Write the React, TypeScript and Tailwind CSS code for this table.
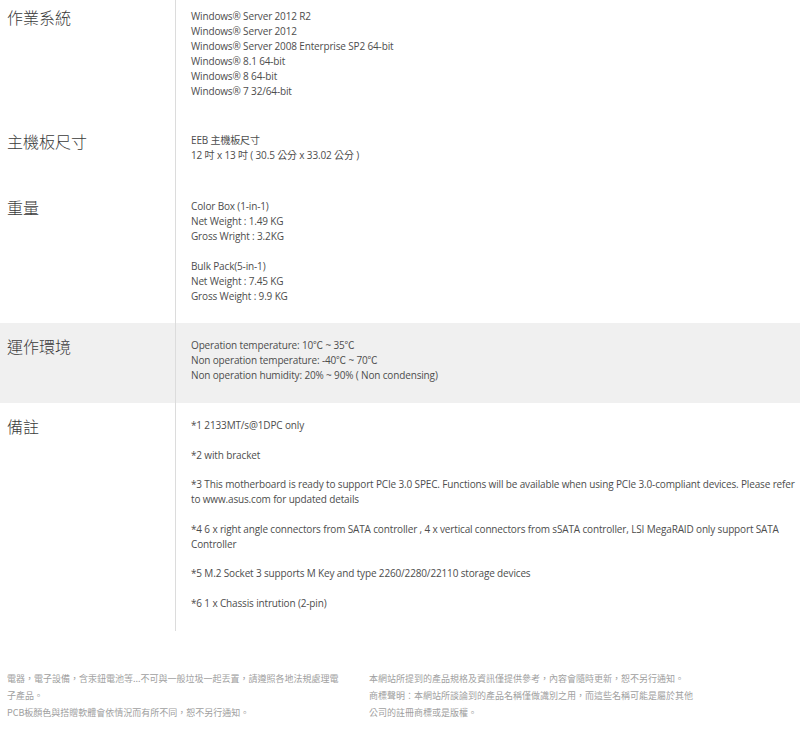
import React from "react";

const valueFont = {
  fontFamily: '"Open Sans", "Noto Sans CJK TC", sans-serif',
};

type Row = {
  label: string;
  gray?: boolean;
  pt: string;
  pb: string;
  content: React.ReactNode;
};

function Lines({ lines }: { lines: string[] }) {
  return (
    <>
      {lines.map((l, i) => (
        <div key={i} className="h-[15px] leading-[15px] whitespace-pre">
          {l}
        </div>
      ))}
    </>
  );
}

const remarks = [
  "*1 2133MT/s@1DPC only",
  "*2 with bracket",
  "*3 This motherboard is ready to support PCIe 3.0 SPEC. Functions will be available when using PCIe 3.0-compliant devices. Please refer to www.asus.com for updated details",
  "*4 6 x right angle connectors from SATA controller , 4 x vertical connectors from sSATA controller, LSI MegaRAID only support SATA Controller",
  "*5 M.2 Socket 3 supports M Key and type 2260/2280/22110 storage devices",
  "*6 1 x Chassis intrution (2-pin)",
];

const rows: Row[] = [
  {
    label: "作業系統",
    pt: "pt-[9px]",
    pb: "pb-[19px]",
    content: (
      <Lines
        lines={[
          "Windows® Server 2012 R2",
          "Windows® Server 2012",
          "Windows® Server 2008 Enterprise SP2 64-bit",
          "Windows® 8.1 64-bit",
          "Windows® 8 64-bit",
          "Windows® 7 32/64-bit",
        ]}
      />
    ),
  },
  {
    label: "主機板尺寸",
    pt: "pt-[15px]",
    pb: "pb-[21px]",
    content: (
      <Lines
        lines={["EEB 主機板尺寸", "12 吋 x 13 吋 ( 30.5 公分 x 33.02 公分 )"]}
      />
    ),
  },
  {
    label: "重量",
    pt: "pt-[15px]",
    pb: "pb-[19px]",
    content: (
      <Lines
        lines={[
          "Color Box (1-in-1)",
          "Net Weight : 1.49 KG",
          "Gross Wright : 3.2KG",
          " ",
          "Bulk Pack(5-in-1)",
          "Net Weight : 7.45 KG",
          "Gross Weight : 9.9 KG",
        ]}
      />
    ),
  },
  {
    label: "運作環境",
    gray: true,
    pt: "pt-[15px]",
    pb: "pb-[20px]",
    content: (
      <Lines
        lines={[
          "Operation temperature: 10℃ ~ 35℃",
          "Non operation temperature: -40℃ ~ 70℃",
          "Non operation humidity: 20% ~ 90% ( Non condensing)",
        ]}
      />
    ),
  },
  {
    label: "備註",
    pt: "pt-[15px]",
    pb: "pb-[20px]",
    content: (
      <div className="flex flex-col gap-[14.5px]">
        {remarks.map((r, i) => (
          <p key={i} className="leading-[15px]">
            {r}
          </p>
        ))}
      </div>
    ),
  },
];

export default function App() {
  return (
    <div className="w-[800px] min-h-[738px] bg-white">
      <div className="flex flex-col">
        {rows.map((row, i) => (
          <div
            key={i}
            className={`flex ${row.gray ? "bg-[#f0f0f0]" : "bg-white"}`}
          >
            <div
              className={`w-[175px] shrink-0 pl-[7px] ${row.pt} text-[16px] leading-[16px] font-light text-[#3a3a3a]`}
              style={{ fontFamily: '"Noto Sans CJK TC", sans-serif' }}
            >
              {row.label}
            </div>
            <div
              className={`flex-1 border-l border-[#dcdcdc] pl-[15px] ${row.pt} ${row.pb} text-[10px] tracking-[-0.15px] text-[#4d4d4d]`}
              style={valueFont}
            >
              {row.content}
            </div>
          </div>
        ))}
      </div>
      <div
        className="flex pt-[39px] text-[9px] leading-[17px] text-[#a0a0a0]"
        style={{ fontFamily: '"Noto Sans CJK TC", sans-serif' }}
      >
        <div className="w-[334px] ml-[7px]">
          <p>
            電器，電子設備，含汞鈕電池等...不可與一般垃圾一起丟置，請遵照各地法規處理電子產品。
          </p>
          <p>PCB板顏色與搭贈軟體會依情況而有所不同，恕不另行通知。</p>
        </div>
        <div className="w-[328px] ml-[28px]">
          <p>
            本網站所提到的產品規格及資訊僅提供參考，內容會隨時更新，恕不另行通知。
          </p>
          <p>
            商標聲明：本網站所談論到的產品名稱僅做識別之用，而這些名稱可能是屬於其他公司的註冊商標或是版權。
          </p>
        </div>
      </div>
    </div>
  );
}
